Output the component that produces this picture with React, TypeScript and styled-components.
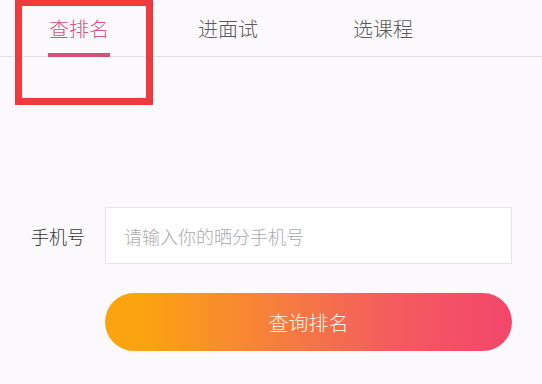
import styled, { createGlobalStyle } from 'styled-components';

const GlobalStyle = createGlobalStyle`
    html, body {
        margin: 0;
        padding: 0;
        background: #fbf9fc;
    }
    body {
        font-family: 'Noto Sans CJK SC', 'Noto Sans', sans-serif;
        width: 542px;
        height: 384px;
        overflow: hidden;
    }
`;

const tabs = ['查排名', '进面试', '选课程'];

const App: React.FC = () => {
    return (
        <Page>
            <GlobalStyle />
            <Nav>
                {tabs.map((t, i) => (
                    <Tab key={t} $active={i === 0}>{t}</Tab>
                ))}
            </Nav>
            <Form>
                <Row>
                    <Label>手机号</Label>
                    <PhoneInput type="tel" placeholder="请输入你的晒分手机号" />
                </Row>
                <SubmitButton type="button">查询排名</SubmitButton>
            </Form>
            <Highlight />
        </Page>
    );
};

export default App;

const Page = styled.div`
    position: relative;
    width: 542px;
    height: 384px;
    background: #fbf9fc;
`;

const Nav = styled.nav`
    display: flex;
    height: 56px;
    padding-left: 49px;
    border-bottom: 1px solid #e3dfe3;
`;

const Tab = styled.div<{ $active?: boolean }>`
    position: relative;
    padding-top: 17px;
    font-size: 20px;
    font-weight: 300;
    line-height: 24px;
    color: ${p => (p.$active ? '#d6527c' : '#5a5a5a')};
    cursor: pointer;

    & + & {
        margin-left: 89px;
    }
    & + & + & {
        margin-left: 95px;
    }

    ${p => p.$active && `
        &::after {
            content: '';
            position: absolute;
            left: -1px;
            right: -1px;
            bottom: -1px;
            height: 4px;
            background: #d65078;
        }
    `}
`;

const Form = styled.div`
    display: flex;
    flex-direction: column;
    margin-top: 150px;
`;

const Row = styled.div`
    display: flex;
    align-items: center;
    padding-left: 31px;
`;

const Label = styled.label`
    width: 74px;
    font-size: 18px;
    font-weight: 300;
    color: #333;
`;

const PhoneInput = styled.input`
    box-sizing: border-box;
    width: 407px;
    height: 57px;
    border: 1px solid #e6e4e6;
    background: #fff;
    padding: 0 18px;
    font-family: inherit;
    font-size: 18px;
    font-weight: 300;
    color: #333;
    outline: none;

    &::placeholder {
        color: #aaa;
    }
`;

const SubmitButton = styled.button`
    margin: 29px 0 0 105px;
    width: 407px;
    height: 58px;
    border: none;
    border-radius: 29px;
    background: linear-gradient(90deg, #fca40f 8%, #f7813a 40%, #f45c5e 70%, #f2466b 100%);
    color: #fff4ea;
    font-family: inherit;
    font-size: 20px;
    font-weight: 300;
    cursor: pointer;
`;

const Highlight = styled.div`
    position: absolute;
    left: 15px;
    top: -1px;
    width: 124px;
    height: 92px;
    border: 7px solid #ef3b3e;
    pointer-events: none;
`;
